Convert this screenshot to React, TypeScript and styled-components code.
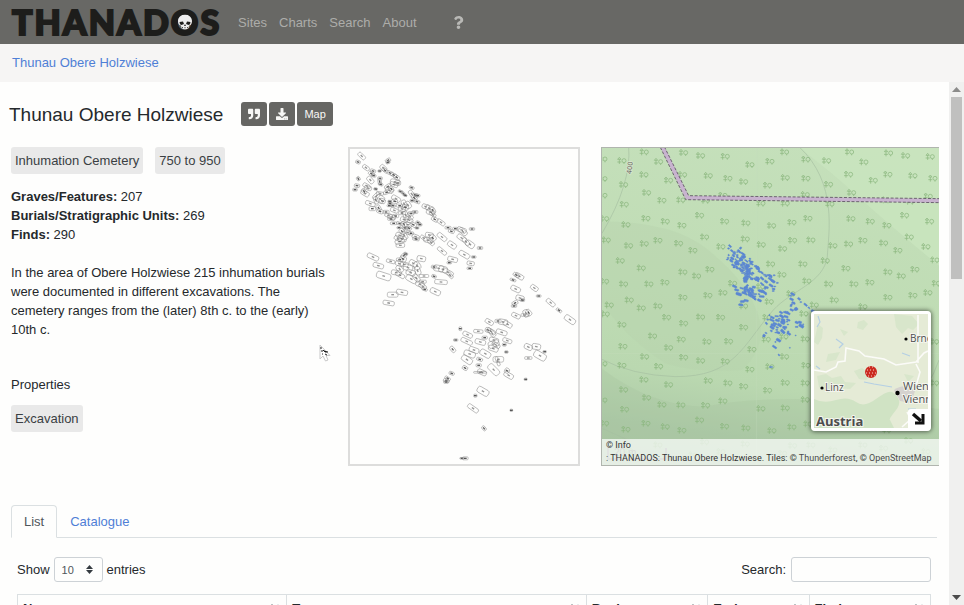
import React from "react";
import styled, { createGlobalStyle } from "styled-components";
import { FaDownload, FaQuestion, FaQuoteRight } from "react-icons/fa";

const GlobalStyle = createGlobalStyle`
  * { box-sizing: border-box; }
  body {
    margin: 0;
    background: #fefefd;
    color: #25292c;
    font-family: "Liberation Sans", Arial, sans-serif;
    font-size: 13px;
    line-height: 19px;
  }
  a { color: #4f7fd6; text-decoration: none; }
  button, input, select { font-family: inherit; }
`;

const Page = styled.div`
  display: flex;
  flex-direction: column;
  height: 100vh;
  overflow: hidden;
`;

const Navbar = styled.header`
  display: flex;
  align-items: center;
  flex: none;
  height: 44px;
  padding: 0 12px;
  background: #686865;
`;

const Brand = styled.a`
  display: flex;
  gap: 2px;
  margin-right: 19px;
  color: #1d1d1b;
  font-family: Lato, "Liberation Sans", sans-serif;
  font-size: 34px;
  font-weight: 900;
  line-height: 42px;
  -webkit-text-stroke: 2px #1d1d1b;
`;

const BrandLetter = styled.span`
  position: relative;
`;

const Skull = styled.svg`
  position: absolute;
  top: 50%;
  left: 50%;
  width: 14px;
  height: 15px;
  transform: translate(-50%, -50%);
`;

const NavLinks = styled.nav`
  display: flex;
  align-items: center;
  gap: 12px;
`;

const NavLink = styled.a`
  color: #adadaa;
`;

const HelpLink = styled.a`
  display: flex;
  margin-left: 23px;
  color: #b9b9b6;
`;

const Breadcrumb = styled.nav`
  flex: none;
  padding: 9px 12px 10px;
  background: #f6f5f4;
`;

const Body = styled.div`
  display: flex;
  flex: 1;
  min-height: 0;
`;

const Content = styled.main`
  flex: 1;
  min-width: 0;
  overflow: hidden;
  padding: 20px 10px 0 11px;
`;

const TitleRow = styled.div`
  display: flex;
  align-items: center;
  gap: 18px;
  margin: 0 0 21px -2px;
`;

const Title = styled.h1`
  margin: 0;
  padding-top: 2px;
  font-size: 19px;
  font-weight: 400;
  line-height: 22px;
`;

const ButtonGroup = styled.div`
  display: flex;
  gap: 2px;
`;

const ToolButton = styled.button`
  display: flex;
  align-items: center;
  justify-content: center;
  height: 24px;
  padding: 0 7px;
  border: 0;
  border-radius: 3px;
  background: #666663;
  color: #f7f7f5;
  font-size: 11px;

  svg { width: 12px; height: 12px; }
`;

const Columns = styled.div`
  display: grid;
  grid-template-columns: 316fr 232fr 338fr;
  gap: 21px;
  margin-bottom: 39px;
`;

const Details = styled.section`
  position: relative;
`;

const BadgeRow = styled.div`
  display: flex;
  gap: 12px;
`;

const Badge = styled.span`
  padding: 4px;
  border-radius: 3px;
  background: #e9e9e9;
  color: #3a3f43;
`;

const Stats = styled.div`
  margin: 13px 0 19px;
`;

const Description = styled.p`
  margin: 0 0 36px;
`;

const SectionLabel = styled.div`
  margin-bottom: 11px;
`;

const Cursor = styled.svg`
  position: absolute;
  top: 197px;
  left: 308px;
  width: 12px;
  height: 18px;
`;

const PlanFrame = styled.figure`
  height: 319px;
  margin: 0;
  border: 2px solid #dddddc;

  svg { display: block; width: 100%; height: 100%; }
`;

const MapFrame = styled.section`
  position: relative;
  height: 319px;
  overflow: hidden;
  border: 1px solid #b0b5ae;
  border-right: 0;
`;

const MapDrawing = styled.svg`
  display: block;
  width: 100%;
  height: 100%;
`;

const Overview = styled.div`
  position: absolute;
  right: 8px;
  bottom: 34px;
  width: 120px;
  height: 120px;
  border: 3px solid #fff;
  border-radius: 4px;
  box-shadow: 0 0 4px 1px rgba(0, 0, 0, 0.5);

  > svg { display: block; width: 100%; height: 100%; }
`;

const OverviewToggle = styled.button`
  position: absolute;
  right: 0;
  bottom: 0;
  width: 20px;
  height: 19px;
  padding: 3px;
  border: 0;
  border-radius: 3px 0 0 0;
  background: #fff;

  svg { display: block; width: 14px; height: 13px; }
`;

const ScaleBar = styled.div`
  position: absolute;
  left: 5px;
  bottom: 5px;
  width: 60px;
  padding-left: 5px;
  border: 2px solid #999;
  border-top: 0;
  color: #777;
  font-size: 10px;
  line-height: 10px;
`;

const Attribution = styled.div`
  position: absolute;
  right: 0;
  bottom: 0;
  left: 0;
  padding: 0 4px;
  background: rgba(250, 252, 249, 0.75);
  color: #333;
  font-family: Roboto, "Liberation Sans", sans-serif;
  font-size: 9px;
  line-height: 13px;
  white-space: nowrap;

  a { color: #4c4c4c; }
`;

const TabList = styled.div`
  display: flex;
  margin-right: 2px;
  border-bottom: 1px solid #dbe0e2;
`;

const Tab = styled.button<{ $active?: boolean }>`
  height: 33px;
  margin-bottom: -1px;
  padding: 0 12px;
  border: 1px solid ${(p) => (p.$active ? "#dbe0e2" : "transparent")};
  border-bottom-color: ${(p) => (p.$active ? "#fefefd" : "transparent")};
  border-radius: 4px 4px 0 0;
  background: transparent;
  color: ${(p) => (p.$active ? "#50565b" : "#4f7fd6")};
  font-size: 13px;
`;

const ListPanel = styled.div`
  padding: 19px 8px 0 6px;
`;

const Controls = styled.div`
  display: flex;
  justify-content: space-between;
  margin-bottom: 12px;
`;

const ControlLabel = styled.label`
  display: flex;
  align-items: center;
  gap: 4px;
`;

const SelectBox = styled.span`
  position: relative;
  display: inline-flex;

  select {
    appearance: none;
    width: 49px;
    height: 25px;
    padding: 0 7px;
    border: 1px solid #cdd2d6;
    border-radius: 3px;
    background: #fefefd;
    color: #50565b;
    font-size: 11px;
  }

  svg {
    position: absolute;
    top: 8px;
    right: 10px;
    width: 7px;
    height: 9px;
    pointer-events: none;
  }
`;

const SearchInput = styled.input`
  width: 140px;
  height: 25px;
  margin-left: 1px;
  padding: 0 7px;
  border: 1px solid #cdd2d6;
  border-radius: 3px;
  background: #fefefd;
  font-size: 11px;
`;

const Table = styled.table`
  width: 100%;
  table-layout: fixed;
  border-collapse: collapse;

  th {
    padding: 4px 4px 4px 5px;
    border: 1px solid #dbe0e2;
    text-align: left;
  }
`;

const Column = styled.col<{ $share: number }>`
  width: ${(p) => p.$share}%;
`;

const HeadCell = styled.div`
  display: flex;
  align-items: flex-start;
  justify-content: space-between;

  svg { width: 11px; height: 13px; margin-top: 4px; margin-right: 2px; }
`;

const ScrollTrack = styled.div`
  display: flex;
  flex: none;
  flex-direction: column;
  width: 15px;
  background: #f0f0ef;
`;

const ScrollArrow = styled.button`
  height: 15px;
  padding: 0 3px;
  border: 0;
  background: #f0f0ef;

  svg { display: block; width: 9px; height: 5px; }
`;

const ScrollRail = styled.div`
  flex: 1;
  padding: 0 2px;
`;

const ScrollThumb = styled.div`
  height: 37%;
  background: #c0c0bf;
`;

/* Grave cuts: x, y, length, width, rotation in degrees. */
type Cut = [number, number, number, number, number];

const cuts: Cut[] = [
  [50, 48, 26, 12, 45], [39, 66, 14, 10, 20], [63, 83, 22, 12, 35], [129, 61, 16, 10, -30], [129, 67, 12, 8, -20],
  [84, 93, 16, 10, 20], [79, 101, 18, 10, 30], [86, 107, 14, 8, 10], [104, 93, 10, 7, 0], [115, 84, 22, 14, 45],
  [120, 91, 20, 10, 40], [135, 99, 20, 10, 25], [146, 105, 20, 10, 30], [155, 112, 20, 12, 35], [40, 116, 12, 10, 60],
  [76, 120, 24, 14, 50], [105, 115, 14, 9, 0], [104, 125, 16, 10, 80], [107, 133, 14, 8, 20], [150, 126, 28, 16, 10],
  [147, 134, 24, 12, 25], [158, 129, 18, 14, 0], [36, 137, 16, 10, 10], [30, 149, 14, 8, 0], [65, 138, 24, 12, 30],
  [69, 144, 22, 12, 20], [60, 160, 26, 14, 30], [57, 154, 18, 10, 45], [92, 147, 11, 7, 10], [128, 140, 20, 12, -35],
  [133, 151, 24, 14, 20], [125, 157, 20, 10, -20], [139, 147, 18, 12, 60], [166, 154, 13, 7, 20], [175, 161, 16, 8, 50],
  [181, 166, 10, 6, 20], [200, 143, 15, 8, 20], [200, 162, 24, 12, 55], [211, 165, 16, 9, 10], [218, 167, 14, 8, 0],
  [208, 174, 18, 12, 45], [201, 182, 12, 8, 0], [216, 185, 18, 9, 20], [105, 160, 22, 9, 10], [94, 168, 24, 14, -45],
  [105, 177, 26, 22, 30], [93, 181, 22, 12, 70], [112, 183, 18, 14, 20], [153, 176, 28, 14, 30], [149, 184, 18, 12, 10],
  [134, 184, 11, 6, 0], [135, 190, 12, 6, 0], [76, 191, 30, 12, 20], [82, 206, 20, 12, 0], [101, 204, 18, 12, 60],
  [105, 214, 20, 12, 20], [133, 197, 14, 6, 0], [144, 197, 16, 7, 10], [164, 197, 20, 9, 0], [177, 191, 22, 14, 70],
  [189, 195, 22, 16, 55], [171, 207, 22, 12, 20], [181, 202, 20, 14, 30], [123, 216, 18, 10, 0], [148, 211, 24, 12, 20],
  [131, 227, 24, 10, 20], [140, 231, 24, 14, 20], [152, 228, 18, 10, 0], [138, 237, 20, 8, 0], [171, 219, 20, 10, 0],
  [182, 226, 26, 14, 70], [198, 220, 18, 10, 0], [210, 216, 17, 9, 0], [195, 229, 22, 12, 45], [177, 239, 22, 14, 20],
  [192, 240, 24, 14, 30], [146, 250, 20, 8, 0], [164, 251, 20, 8, 20], [177, 253, 18, 14, 60], [189, 254, 24, 14, 10],
  [162, 263, 13, 6, 0], [180, 264, 16, 8, 0], [192, 265, 15, 10, 30], [216, 264, 11, 6, 0], [219, 248, 13, 9, 20],
  [225, 254, 12, 8, 0], [205, 254, 20, 12, 30], [171, 274, 18, 14, 45], [187, 277, 22, 10, 20], [198, 280, 16, 9, 0],
  [164, 286, 24, 14, 20], [178, 286, 26, 14, 60], [159, 296, 24, 12, 30], [171, 297, 26, 16, 10], [164, 304, 28, 14, -20],
  [166, 316, 26, 12, 0], [212, 290, 22, 12, 20], [213, 297, 20, 9, 10], [242, 200, 22, 13, 20], [253, 205, 24, 15, 30],
  [263, 211, 20, 14, 60], [257, 217, 26, 15, 20], [263, 223, 22, 10, 40], [269, 238, 20, 12, 30], [288, 247, 26, 12, 35],
  [309, 263, 18, 8, 0], [319, 274, 18, 10, 20], [331, 266, 16, 8, 0], [350, 270, 28, 14, 20], [354, 275, 28, 14, 40],
  [381, 267, 16, 8, 0], [350, 294, 30, 14, 35], [363, 305, 26, 12, 50], [375, 313, 28, 18, 35], [405, 324, 16, 9, 0],
  [291, 291, 32, 14, 40], [321, 315, 28, 16, 35], [291, 333, 32, 11, 40], [358, 344, 34, 15, 30], [386, 351, 14, 7, 0],
  [323, 358, 30, 14, 15], [313, 368, 14, 7, 0], [377, 370, 22, 12, 10], [374, 385, 16, 7, 0], [236, 294, 22, 10, 35],
  [253, 285, 24, 14, 10], [263, 294, 20, 18, 50], [250, 301, 28, 14, 15], [258, 307, 22, 12, 40], [84, 351, 36, 14, 25],
  [100, 377, 32, 14, 15], [116, 408, 44, 20, 18], [137, 364, 26, 10, 15], [164, 359, 20, 10, 0], [177, 346, 20, 12, -40],
  [182, 342, 12, 7, 0], [174, 357, 20, 16, 20], [163, 371, 24, 14, 20], [178, 373, 24, 12, 10], [189, 383, 28, 18, 20],
  [164, 387, 24, 16, 50], [205, 370, 26, 16, 30], [216, 377, 24, 20, 60], [229, 356, 26, 16, 10], [218, 392, 26, 16, 70],
  [197, 398, 28, 16, 15], [154, 398, 30, 14, 10], [165, 405, 30, 12, 30], [199, 417, 34, 18, 30], [214, 414, 26, 14, 50],
  [237, 408, 28, 9, 0], [233, 425, 22, 9, 0], [225, 433, 26, 14, 20], [233, 439, 24, 14, 40], [239, 448, 16, 8, 20],
  [267, 409, 14, 9, 20], [267, 381, 16, 9, 10], [281, 385, 30, 18, 10], [294, 388, 26, 18, 15], [309, 397, 34, 14, 30],
  [315, 405, 24, 10, 50], [288, 426, 38, 13, 5], [271, 455, 32, 16, 25], [143, 464, 32, 15, 0], [171, 457, 34, 15, 10],
  [131, 489, 34, 13, 10], [514, 405, 20, 10, 30], [523, 409, 28, 14, 30], [504, 420, 18, 7, 20], [512, 447, 30, 15, 25],
  [525, 474, 25, 15, 15], [510, 489, 18, 12, -30], [507, 498, 16, 8, 0], [568, 444, 24, 14, 35], [581, 468, 14, 7, 0],
  [617, 488, 30, 13, 40], [642, 511, 18, 8, 35], [675, 539, 36, 17, 35], [532, 480, 14, 8, 10], [513, 527, 27, 13, 25],
  [543, 520, 22, 16, 70], [551, 518, 20, 14, 50], [539, 525, 22, 8, 0], [433, 546, 26, 13, 30], [459, 543, 18, 10, 0],
  [474, 546, 28, 16, 10], [488, 553, 28, 14, 30], [346, 566, 9, 12, 0], [368, 584, 30, 13, 25], [400, 574, 28, 10, 5],
  [429, 570, 17, 14, 15], [438, 574, 28, 13, 30], [442, 580, 24, 14, 50], [470, 577, 33, 14, 18], [419, 593, 16, 9, 0],
  [332, 600, 13, 7, 0], [365, 604, 36, 13, 25], [406, 606, 32, 15, 15], [447, 600, 28, 13, 15], [446, 612, 33, 20, -20],
  [453, 615, 26, 12, 35], [487, 602, 28, 12, 20], [478, 614, 12, 9, 0], [445, 626, 30, 15, 20], [323, 628, 20, 12, 50],
  [387, 630, 30, 15, 20], [374, 642, 35, 17, 20], [421, 641, 34, 18, 30], [484, 636, 11, 7, 0], [404, 658, 18, 9, 20],
  [366, 659, 35, 18, 35], [460, 658, 32, 17, 0], [458, 664, 28, 8, 70], [401, 676, 16, 9, 0], [360, 684, 16, 12, 30],
  [405, 697, 38, 5, 0], [411, 697, 28, 14, 25], [446, 689, 40, 19, 45], [486, 692, 14, 15, 30], [491, 706, 30, 15, 30],
  [320, 700, 16, 9, 20], [308, 715, 18, 8, 35], [304, 722, 18, 9, 20], [303, 726, 14, 8, 0], [550, 621, 25, 16, 25],
  [574, 620, 26, 17, 10], [585, 647, 39, 21, 30], [599, 635, 10, 7, 0], [550, 654, 22, 8, 0], [542, 718, 9, 7, 0],
  [414, 754, 37, 19, 30], [391, 767, 10, 9, 0], [384, 805, 36, 13, 35], [499, 811, 8, 7, 0], [417, 865, 15, 10, 50],
  [351, 955, 13, 5, 0], [361, 955, 17, 9, 0],
];

const trees: [number, number][] = [
  [23, 57], [80, 62], [147, 36], [190, 65], [265, 38], [316, 47], [390, 49], [464, 74], [524, 64], [568, 36], [632, 58],
  [694, 62], [763, 36], [806, 66], [880, 39], [931, 47], [1005, 50], [23, 116], [85, 134], [146, 104], [220, 121],
  [262, 104], [339, 107], [398, 115], [445, 125], [517, 136], [570, 113], [632, 115], [700, 133], [760, 103], [834, 121],
  [878, 103], [953, 107], [1013, 115], [23, 166], [154, 158], [200, 181], [257, 180], [331, 181], [383, 166], [497, 190],
  [570, 190], [630, 164], [704, 192], [769, 158], [872, 180], [945, 184], [999, 169], [87, 193], [28, 236], [92, 254],
  [152, 235], [210, 244], [260, 256], [313, 226], [388, 244], [452, 249], [529, 257], [590, 247], [638, 235], [767, 236],
  [825, 244], [875, 256], [928, 226], [1003, 244], [33, 300], [100, 317], [147, 311], [188, 301], [250, 310], [293, 331],
  [328, 291], [377, 320], [450, 297], [498, 314], [562, 326], [592, 301], [647, 300], [713, 317], [760, 312], [803, 301],
  [865, 309], [908, 331], [942, 291], [992, 320], [75, 362], [138, 384], [344, 388], [263, 396], [304, 408], [526, 372],
  [623, 372], [690, 362], [752, 385], [959, 388], [878, 396], [918, 408], [1019, 360], [560, 404], [635, 423], [28, 424],
  [85, 432], [161, 432], [209, 427], [412, 430], [496, 440], [700, 432], [776, 432], [824, 427], [1023, 430], [102, 480],
  [42, 495], [263, 472], [338, 466], [383, 458], [522, 485], [587, 461], [657, 495], [717, 480], [878, 472], [953, 466],
  [998, 458], [138, 504], [188, 498], [445, 498], [803, 500], [30, 522], [214, 532], [265, 550], [316, 531], [376, 532],
  [80, 554], [445, 562], [172, 588], [258, 598], [335, 605], [400, 604], [83, 619], [220, 623], [148, 650], [265, 652],
  [316, 662], [390, 664], [80, 676], [190, 679], [464, 688], [470, 628], [513, 598], [515, 532], [566, 590], [568, 650],
  [524, 680], [626, 521], [630, 597], [632, 676], [23, 671], [146, 719], [85, 749], [220, 734], [339, 722], [398, 729],
  [445, 739], [517, 751], [570, 728], [630, 729], [154, 773], [200, 794], [257, 795], [331, 796], [383, 783], [497, 806],
  [570, 804], [630, 779], [23, 780], [88, 808], [28, 850], [92, 868], [152, 850], [210, 860], [260, 871], [313, 840],
  [388, 859], [452, 864], [530, 872], [590, 861], [638, 852], [875, 870], [1018, 605], [1018, 729], [767, 851], [940, 902],
  [328, 906], [450, 912], [592, 917], [647, 915], [188, 915], [713, 930], [803, 915], [865, 925], [992, 935],
  [100, 932], [293, 945], [377, 935], [562, 940],
];

const Cuts = ({ labels }: { labels?: boolean }) => (
  <>
    {cuts.map(([x, y, length, width, angle], i) => (
      <g key={i} transform={`translate(${x} ${y}) rotate(${angle})`}>
        <rect x={-length / 2} y={-width / 2} width={length} height={width} rx={width / 3} />
        {labels && (
          <rect x={-4} y={-2} width={8} height={4} fill="#3c3c3c" stroke="none" opacity={length < 21 ? 0.85 : 0.55} />
        )}
      </g>
    ))}
  </>
);

const SitePlan = () => (
  <PlanFrame aria-label="Site plan">
    <svg viewBox="15 27 684 945" preserveAspectRatio="none">
      <g fill="none" stroke="#8d8d8d" strokeWidth="1.6">
        <Cuts labels />
      </g>
    </svg>
  </PlanFrame>
);

const SiteMap = () => (
  <MapFrame aria-label="Map">
    <MapDrawing viewBox="21 24 1011 951" preserveAspectRatio="xMidYMid slice">
      <defs>
        <linearGradient id="slope" x1="0.6" y1="0" x2="0.45" y2="1">
          <stop offset="0" stopColor="#c5e0bb" />
          <stop offset="0.5" stopColor="#bfdcb4" />
          <stop offset="0.74" stopColor="#bad8b0" />
          <stop offset="0.9" stopColor="#adcaa7" />
          <stop offset="1" stopColor="#a9c5a4" />
        </linearGradient>
        <g id="tree">
          <path d="M-7 -10L-12 -4H-2ZM-13 4H-1M-7 -4V10M7 6V10" />
          <circle cx="7" cy="0" r="6" />
        </g>
      </defs>
      <rect x="0" y="0" width="1060" height="1000" fill="url(#slope)" />
      <path d="M580 0Q680 70 790 170T1060 400V0Z" fill="#c9e5bf" opacity="0.75" />
      <path d="M0 245Q230 240 340 330T480 500Q530 610 440 690Q300 700 210 670Q60 570 0 450Z" fill="#b6d2ac" opacity="0.4" />
      <path d="M0 670Q160 800 330 800Q560 750 1060 810V1000H0Z" fill="#a3bf9d" opacity="0.25" />
      <g fill="none" stroke="#a6c0a1" strokeWidth="2">
        <path d="M101 20Q110 130 21 280" />
        <path d="M612 20C730 130 700 280 697 350C685 430 590 450 535 510C440 620 420 710 240 710Q110 705 21 658" />
        <path d="M1032 660Q1005 740 940 810M21 865L110 905" />
      </g>
      <path d="M485 20V975M21 640H1032" stroke="#c7debf" strokeWidth="1.5" opacity="0.6" />
      <g fill="none" stroke="#8ab67e" strokeWidth="2.2">
        {trees.map(([x, y], i) => (
          <use key={i} href="#tree" x={x} y={y} />
        ))}
      </g>
      <g fill="none" strokeLinejoin="round">
        <path d="M202 20L277 173L1040 182" stroke="#c8b3cf" strokeWidth="12" />
        <path d="M196 22L272 179L1040 188M208 20L281 167L1040 176" stroke="#5e5462" strokeWidth="2.6" strokeDasharray="9 5" />
      </g>
      <text transform="translate(109 103) rotate(-83)" fontFamily="DejaVu Sans" fontSize="20" fill="#665f59" stroke="#d6e5cd" strokeWidth="5" paintOrder="stroke">400</text>
      <g transform="translate(385 299) scale(0.4)" fill="#5b87d2" stroke="#5b87d2" strokeWidth="3">
        <Cuts />
      </g>
    </MapDrawing>
    <ScaleBar>20 m</ScaleBar>
    <Attribution>
      <div>© Info</div>
      <div>
        : THANADOS: Thunau Obere Holzwiese. Tiles: © <a href="#thunderforest">Thunderforest</a>, ©{" "}
        <a href="#osm">OpenStreetMap</a>
      </div>
    </Attribution>
    <Overview>
      <svg viewBox="0 0 114 114">
        <rect width="114" height="114" fill="#e5ebd6" />
        <path d="M0 85Q10 90 22 86T42 88T62 85T78 78Q90 86 82 96T76 106L80 114H0Z" fill="#d0e3c4" />
        <path d="M3 62L12 60L18 64L27 62L31 68L42 69L36 75L22 74L14 79L5 73ZM40 57L48 54L53 58L58 60L52 66L45 65ZM80 0L98 2L105 10L99 16L94 14L88 20L82 13ZM44 8L50 6L54 10L49 16L43 14ZM4 10L9 14L8 24L4 31L0 28ZM26 15L34 18L30 22ZM14 40L26 38L22 46L12 48ZM90 60L100 62L94 68Z" fill="#d4e5c8" opacity="0.8" />
        <path d="M80 76Q91 68 101 77L97 89L86 87Z" fill="#d5d2cf" />
        <path d="M0 56L12 58L22 53L24 48L31 47L32 34L45 37L51 42L70 45L82 51L102 48L110 39L114 37M104 1V49M102 50L106 58L102 72M88 113L97 105L93 98" fill="none" stroke="#fbfbf8" strokeWidth="1.6" />
        <path d="M4 2L6 8L3 13M22 25L29 30L25 34M88 39L96 42M2 52L6 55M50 68L60 70L78 73M94 95H102" fill="none" stroke="#b4cfe4" strokeWidth="1.2" />
        <g fontFamily="Open Sans, Noto Sans" fill="#4d4d4d" stroke="#f4f5ee" strokeWidth="2" paintOrder="stroke">
          <text x="96" y="28" fontSize="10">Brno</text>
          <text x="11" y="77" fontSize="10">Linz</text>
          <text x="89" y="76" fontSize="11">Wien</text>
          <text x="89" y="89" fontSize="11">Vienna</text>
          <text x="2" y="112" fontSize="13" fontWeight="700">Austria</text>
        </g>
        <circle cx="92" cy="25" r="1.6" />
        <circle cx="8" cy="74" r="1.6" />
        <circle cx="83.500" cy="79" r="2.2" />
        <circle cx="57" cy="58" r="6" fill="#cb2a20" />
        <path d="M53 56H62M52 59H62M54 62H61M55 53H60" stroke="#f3cfc9" strokeWidth="1" strokeDasharray="1 2" />
      </svg>
      <OverviewToggle aria-label="Hide overview map">
        <svg viewBox="0 0 14 13" fill="none" stroke="#111">
          <path d="M2 2L10 9" strokeWidth="3.400" />
          <path d="M12 2V11H4" strokeWidth="3" />
        </svg>
      </OverviewToggle>
    </Overview>
  </MapFrame>
);

const SkullMark = () => (
  <Skull viewBox="0 0 14 15">
    <path d="M7 0C3 0 0 3 0 6.500C0 8.500 .6 9.500 1.500 10.500L3 11L3.500 13.500L6 15H8L10.500 13.500L11 11L12.500 10.500C13.500 9.500 14 8 14 6.500C14 3 11 0 7 0Z" fill="#eee" />
    <path d="M1.500 7.500L5 7L6 9.500L3.500 10.500L2 9.800ZM12.500 7.500L9 7L8 9.500L10.500 10.500L12 9.800ZM7 9.500L8 11.500H6ZM4 12.500H5V13.300H4ZM6.500 12.700H7.500V13.800H6.500ZM9 12.500H10V13.300H9Z" fill="#1d1d1b" />
  </Skull>
);

const SortIcon = () => (
  <svg viewBox="0 0 11 13" fill="none" stroke="#b8bcbe" aria-hidden="true">
    <path d="M3 12V1M1 4L3 1L5 4" />
    <path d="M9 1V12M7 9L9 12L11 9" stroke="#d5d8da" />
  </svg>
);

const columns = [
  { name: "Name", share: 29.5 },
  { name: "Type", share: 32.8 },
  { name: "Begin", share: 13.3 },
  { name: "End", share: 11.1 },
  { name: "Finds", share: 13.3 },
];

export default function App() {
  return (
    <Page>
      <GlobalStyle />
      <Navbar>
        <Brand href="#home" aria-label="THANADOS">
          {[..."THANADOS"].map((letter, i) => (
            <BrandLetter key={i}>
              {letter}
              {letter === "O" && <SkullMark />}
            </BrandLetter>
          ))}
        </Brand>
        <NavLinks>
          <NavLink href="#sites">Sites</NavLink>
          <NavLink href="#charts">Charts</NavLink>
          <NavLink href="#search">Search</NavLink>
          <NavLink href="#about">About</NavLink>
          <HelpLink href="#help" aria-label="Help">
            <FaQuestion />
          </HelpLink>
        </NavLinks>
      </Navbar>
      <Breadcrumb>
        <a href="#site">Thunau Obere Holzwiese</a>
      </Breadcrumb>
      <Body>
        <Content>
          <TitleRow>
            <Title>Thunau Obere Holzwiese</Title>
            <ButtonGroup>
              <ToolButton aria-label="Cite"><FaQuoteRight /></ToolButton>
              <ToolButton aria-label="Download"><FaDownload /></ToolButton>
              <ToolButton>Map</ToolButton>
            </ButtonGroup>
          </TitleRow>
          <Columns>
            <Details>
              <BadgeRow>
                <Badge>Inhumation Cemetery</Badge>
                <Badge>750 to 950</Badge>
              </BadgeRow>
              <Stats>
                <div><b>Graves/Features:</b> 207</div>
                <div><b>Burials/Stratigraphic Units:</b> 269</div>
                <div><b>Finds:</b> 290</div>
              </Stats>
              <Description>
                In the area of Obere Holzwiese 215 inhumation burials were documented in different excavations. The
                cemetery ranges from the (later) 8th c. to the (early) 10th c.
              </Description>
              <SectionLabel>Properties</SectionLabel>
              <BadgeRow>
                <Badge>Excavation</Badge>
              </BadgeRow>
              <Cursor viewBox="0 0 12 18">
                <path d="M1 1V15L4 12L6.500 17L9 16L7 11.500H11Z" fill="#fff" stroke="#c9c9c9" />
                <path d="M2 3V5M2 7H4M4 6L6 8H9M3 10H4M6 10L8 11" stroke="#222" />
              </Cursor>
            </Details>
            <SitePlan />
            <SiteMap />
          </Columns>
          <TabList role="tablist">
            <Tab role="tab" aria-selected="true" $active>List</Tab>
            <Tab role="tab" aria-selected="false">Catalogue</Tab>
          </TabList>
          <ListPanel>
            <Controls>
              <ControlLabel>
                Show
                <SelectBox>
                  <select defaultValue="10">
                    <option>10</option>
                    <option>25</option>
                    <option>50</option>
                  </select>
                  <svg viewBox="0 0 7 9" fill="#343a40">
                    <path d="M3.500 0L7 4H0ZM0 5H7L3.500 9Z" />
                  </svg>
                </SelectBox>
                entries
              </ControlLabel>
              <ControlLabel>
                Search:
                <SearchInput type="search" />
              </ControlLabel>
            </Controls>
            <Table>
              <colgroup>
                {columns.map((c) => <Column key={c.name} $share={c.share} />)}
              </colgroup>
              <thead>
                <tr>
                  {columns.map((c) => (
                    <th key={c.name} scope="col">
                      <HeadCell>{c.name}<SortIcon /></HeadCell>
                    </th>
                  ))}
                </tr>
              </thead>
            </Table>
          </ListPanel>
        </Content>
        <ScrollTrack>
          <ScrollArrow aria-label="Scroll up">
            <svg viewBox="0 0 9 5" fill="#8b8b8a"><path d="M0 5L4.500 0L9 5Z" /></svg>
          </ScrollArrow>
          <ScrollRail><ScrollThumb /></ScrollRail>
          <ScrollArrow aria-label="Scroll down">
            <svg viewBox="0 0 9 5" fill="#4b4b4b"><path d="M0 0H9L4.500 5Z" /></svg>
          </ScrollArrow>
        </ScrollTrack>
      </Body>
    </Page>
  );
}
